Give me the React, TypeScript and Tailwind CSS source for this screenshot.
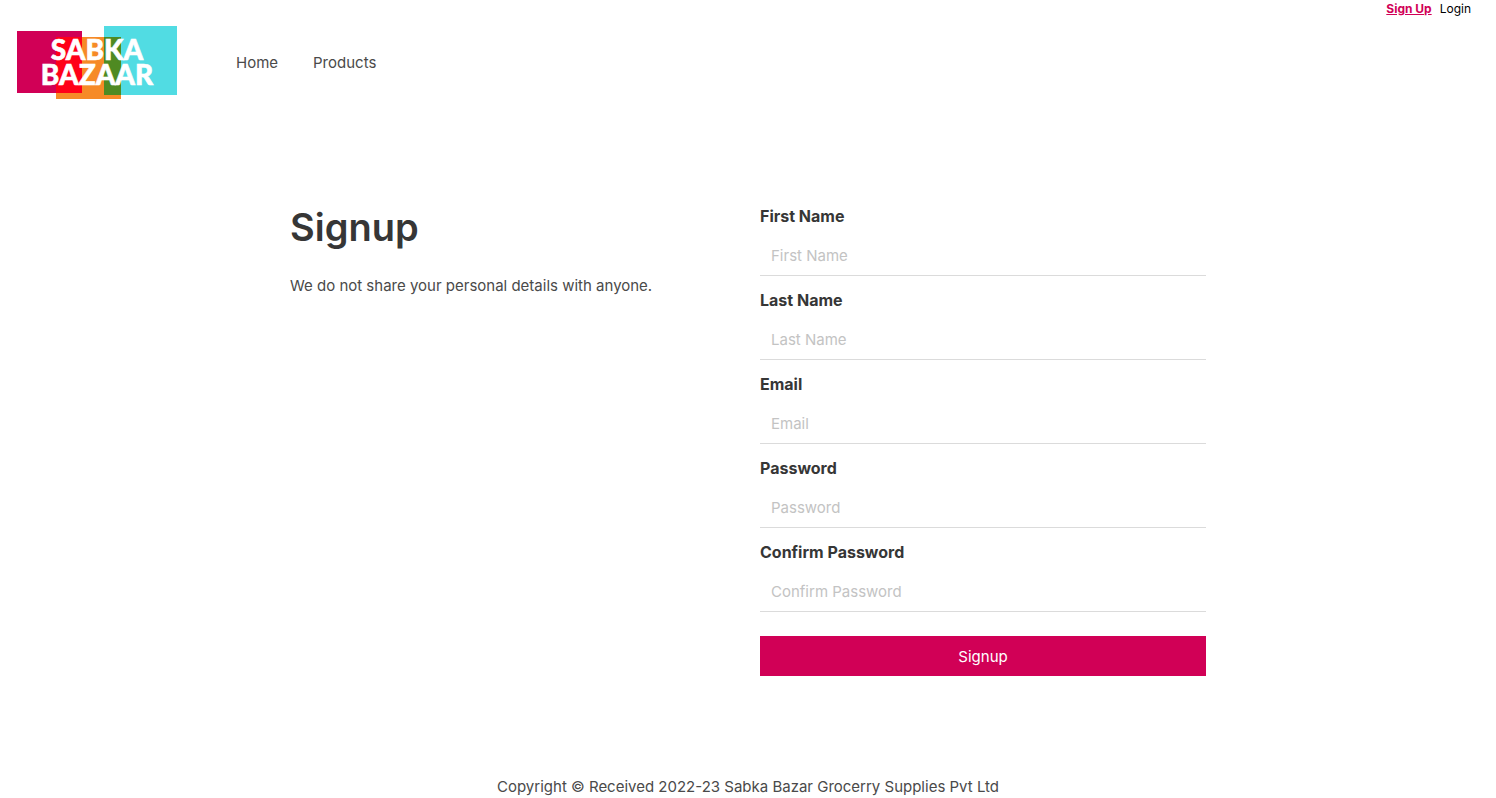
const fields = [
  { id: "firstName", label: "First Name", type: "text" },
  { id: "lastName", label: "Last Name", type: "text" },
  { id: "email", label: "Email", type: "email" },
  { id: "password", label: "Password", type: "password" },
  { id: "confirmPassword", label: "Confirm Password", type: "password" },
];

function Logo() {
  return (
    <svg viewBox="0 0 160 73" className="h-[73px] w-40" role="img" aria-label="Sabka Bazaar">
      <rect x="0" y="5" width="65" height="62" fill="#d10056" />
      <rect x="39" y="11" width="65" height="62" fill="#f68a27" />
      <rect x="87" y="0" width="73" height="69" fill="#51dce3" />
      <rect x="39" y="11" width="26" height="56" fill="#ff0018" />
      <rect x="87" y="11" width="17" height="58" fill="#4f8a22" />
      <g
        fill="#ffffff"
        stroke="#ffffff"
        strokeWidth="0.6"
        className="font-['Lato_Black','Lato',sans-serif] font-black"
        textAnchor="middle"
      >
        <text x="80" y="34" fontSize="28">SABKA</text>
        <text x="80" y="59" fontSize="28">BAZAAR</text>
      </g>
    </svg>
  );
}

function Field({ id, label, type }: { id: string; label: string; type: string }) {
  return (
    <div className="flex flex-col gap-2">
      <label htmlFor={id} className="text-base font-bold leading-6 text-[#363636]">
        {label}
      </label>
      <input
        id={id}
        name={id}
        type={type}
        placeholder={label}
        className="h-10 w-full border-b border-[#dbdbdb] bg-white px-[11px] text-[#363636] outline-none placeholder:text-[#c3c3c3] focus:border-[#d10056]"
      />
    </div>
  );
}

export default function App() {
  return (
    <div className="flex min-h-screen flex-col bg-white font-['Inter',sans-serif] text-[15px] text-[#4a4a4a]">
      <header>
        <div className="flex justify-end gap-2 pr-[25px] text-xs leading-[18px]">
          <a href="#signup" className="font-bold text-[#d10056] underline">
            Sign Up
          </a>
          <a href="#login" className="text-black">
            Login
          </a>
        </div>
        <div className="flex items-center px-[17px] py-2">
          <a href="#home">
            <Logo />
          </a>
          <nav className="ml-[59px] flex gap-[35px] leading-6">
            <a href="#home">Home</a>
            <a href="#products">Products</a>
          </nav>
        </div>
      </header>

      <main className="mx-auto grid w-full max-w-[916px] flex-1 grid-cols-2 gap-6 pt-[97px]">
        <section>
          <h1 className="text-[38px] font-semibold leading-[46px] text-[#363636]">Signup</h1>
          <p className="mt-6 leading-6">We do not share your personal details with anyone.</p>
        </section>
        <form className="flex flex-col gap-3" onSubmit={(event) => event.preventDefault()}>
          {fields.map((field) => (
            <Field key={field.id} {...field} />
          ))}
          <button type="submit" className="mt-3 h-10 w-full bg-[#d10056] pt-0.5 text-white">
            Signup
          </button>
        </form>
      </main>

      <footer className="text-center leading-[22px]">
        Copyright © Received 2022-23 Sabka Bazar Grocerry Supplies Pvt Ltd
      </footer>
    </div>
  );
}
